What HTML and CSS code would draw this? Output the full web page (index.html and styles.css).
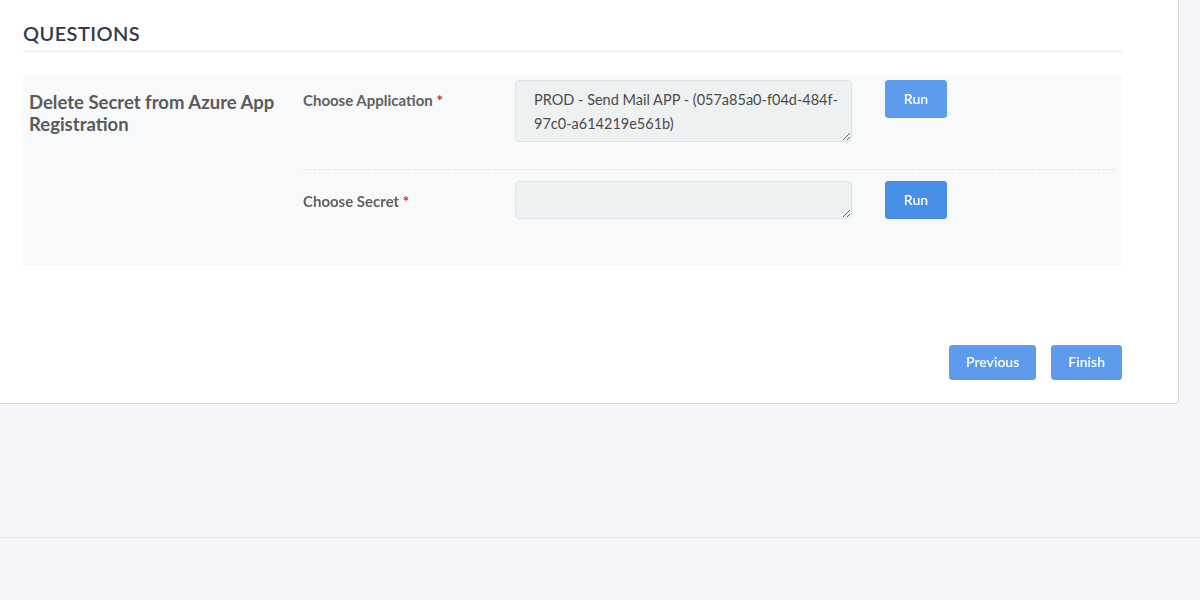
FILE: index.html
```html
<!DOCTYPE html>
<html lang="en">
<head>
    <meta charset="UTF-8">
    <meta name="viewport" content="width=device-width, initial-scale=1.0">
    <title>Questions</title>
    <link rel="stylesheet" href="styles.css">
</head>
<body>
    <div class="card">
        <h2 class="section-title">QUESTIONS</h2>
        <div class="question-box">
            <div class="question-title">Delete Secret from Azure App Registration</div>
            <div class="question-rows">
                <div class="q-row first">
                    <label class="q-label">Choose Application <span class="req">*</span></label>
                    <textarea class="q-field tall" readonly>PROD - Send Mail APP - (057a85a0-f04d-484f-97c0-a614219e561b)</textarea>
                    <button class="btn run">Run</button>
                </div>
                <div class="q-row second">
                    <label class="q-label">Choose Secret <span class="req">*</span></label>
                    <textarea class="q-field short" readonly></textarea>
                    <button class="btn run active">Run</button>
                </div>
            </div>
        </div>
        <div class="actions">
            <button class="btn nav">Previous</button>
            <button class="btn nav">Finish</button>
        </div>
    </div>
    <div class="footer"></div>
</body>
</html>
```

FILE: styles.css
```css
body {
    margin: 0;
    background: #f5f6fa;
    font-family: 'Source Sans Pro', 'Lato', 'Liberation Sans', sans-serif;
    color: #4a4a4a;
}
.card {
    width: 1179px;
    box-sizing: border-box;
    background: #fff;
    border-right: 1px solid #d3dae0;
    border-bottom: 1px solid #d3dae0;
    border-bottom-right-radius: 4px;
    padding: 20px 56px 23px 23px;
}
.section-title {
    margin: 0;
    font-size: 20px;
    font-weight: 600;
    color: #343a4a;
    letter-spacing: 0.4px;
    line-height: 26px;
    padding-bottom: 5px;
    border-bottom: 1px solid #e3e5e8;
}
.question-box {
    margin-top: 23px;
    background: #f8f9fb;
    display: flex;
    height: 190px;
}
.question-title {
    width: 274px;
    padding: 16px 0 0 6px;
    font-size: 18.5px;
    font-weight: 700;
    line-height: 22px;
    color: #5a5a5a;
}
.question-rows {
    flex: 1;
    padding-right: 7px;
}
.q-row {
    display: flex;
    align-items: flex-start;
}
.q-row.first {
    padding: 5px 0 27px;
    border-bottom: 1px dashed #e3e6ea;
}
.q-row.second {
    padding-top: 11px;
}
.q-label {
    width: 212px;
    padding-top: 11px;
    font-size: 15px;
    font-weight: 700;
    color: #606060;
}
.req {
    color: #e02020;
}
.q-field {
    width: 337px;
    box-sizing: border-box;
    background: #eef1f2;
    border: 1px solid #dde2e5;
    border-radius: 4px;
    font-family: inherit;
    font-size: 14.5px;
    line-height: 24px;
    color: #4a4a4a;
    padding: 7px 4px 6px 18px;
    margin: 0;
}
.q-field.tall {
    height: 62px;
}
.q-field.short {
    height: 38px;
}
.btn {
    font-family: inherit;
    font-weight: 600;
    color: #fff;
    background: #5d9cec;
    border: 1px solid #5d9cec;
    border-radius: 3px;
    cursor: pointer;
}
.run {
    margin-left: 33px;
    width: 62px;
    height: 38px;
    font-size: 14px;
    padding-bottom: 2px;
}
.run.active {
    background: #4a8fe7;
    border-color: #3f86e2;
}
.actions {
    display: flex;
    justify-content: flex-end;
    gap: 15px;
    margin-top: 80px;
}
.nav {
    height: 35px;
    padding: 0 16px 2px;
    font-size: 14px;
}
.footer {
    margin-top: 133px;
    border-top: 1px solid #e1e4ea;
    height: 62px;
}
```
